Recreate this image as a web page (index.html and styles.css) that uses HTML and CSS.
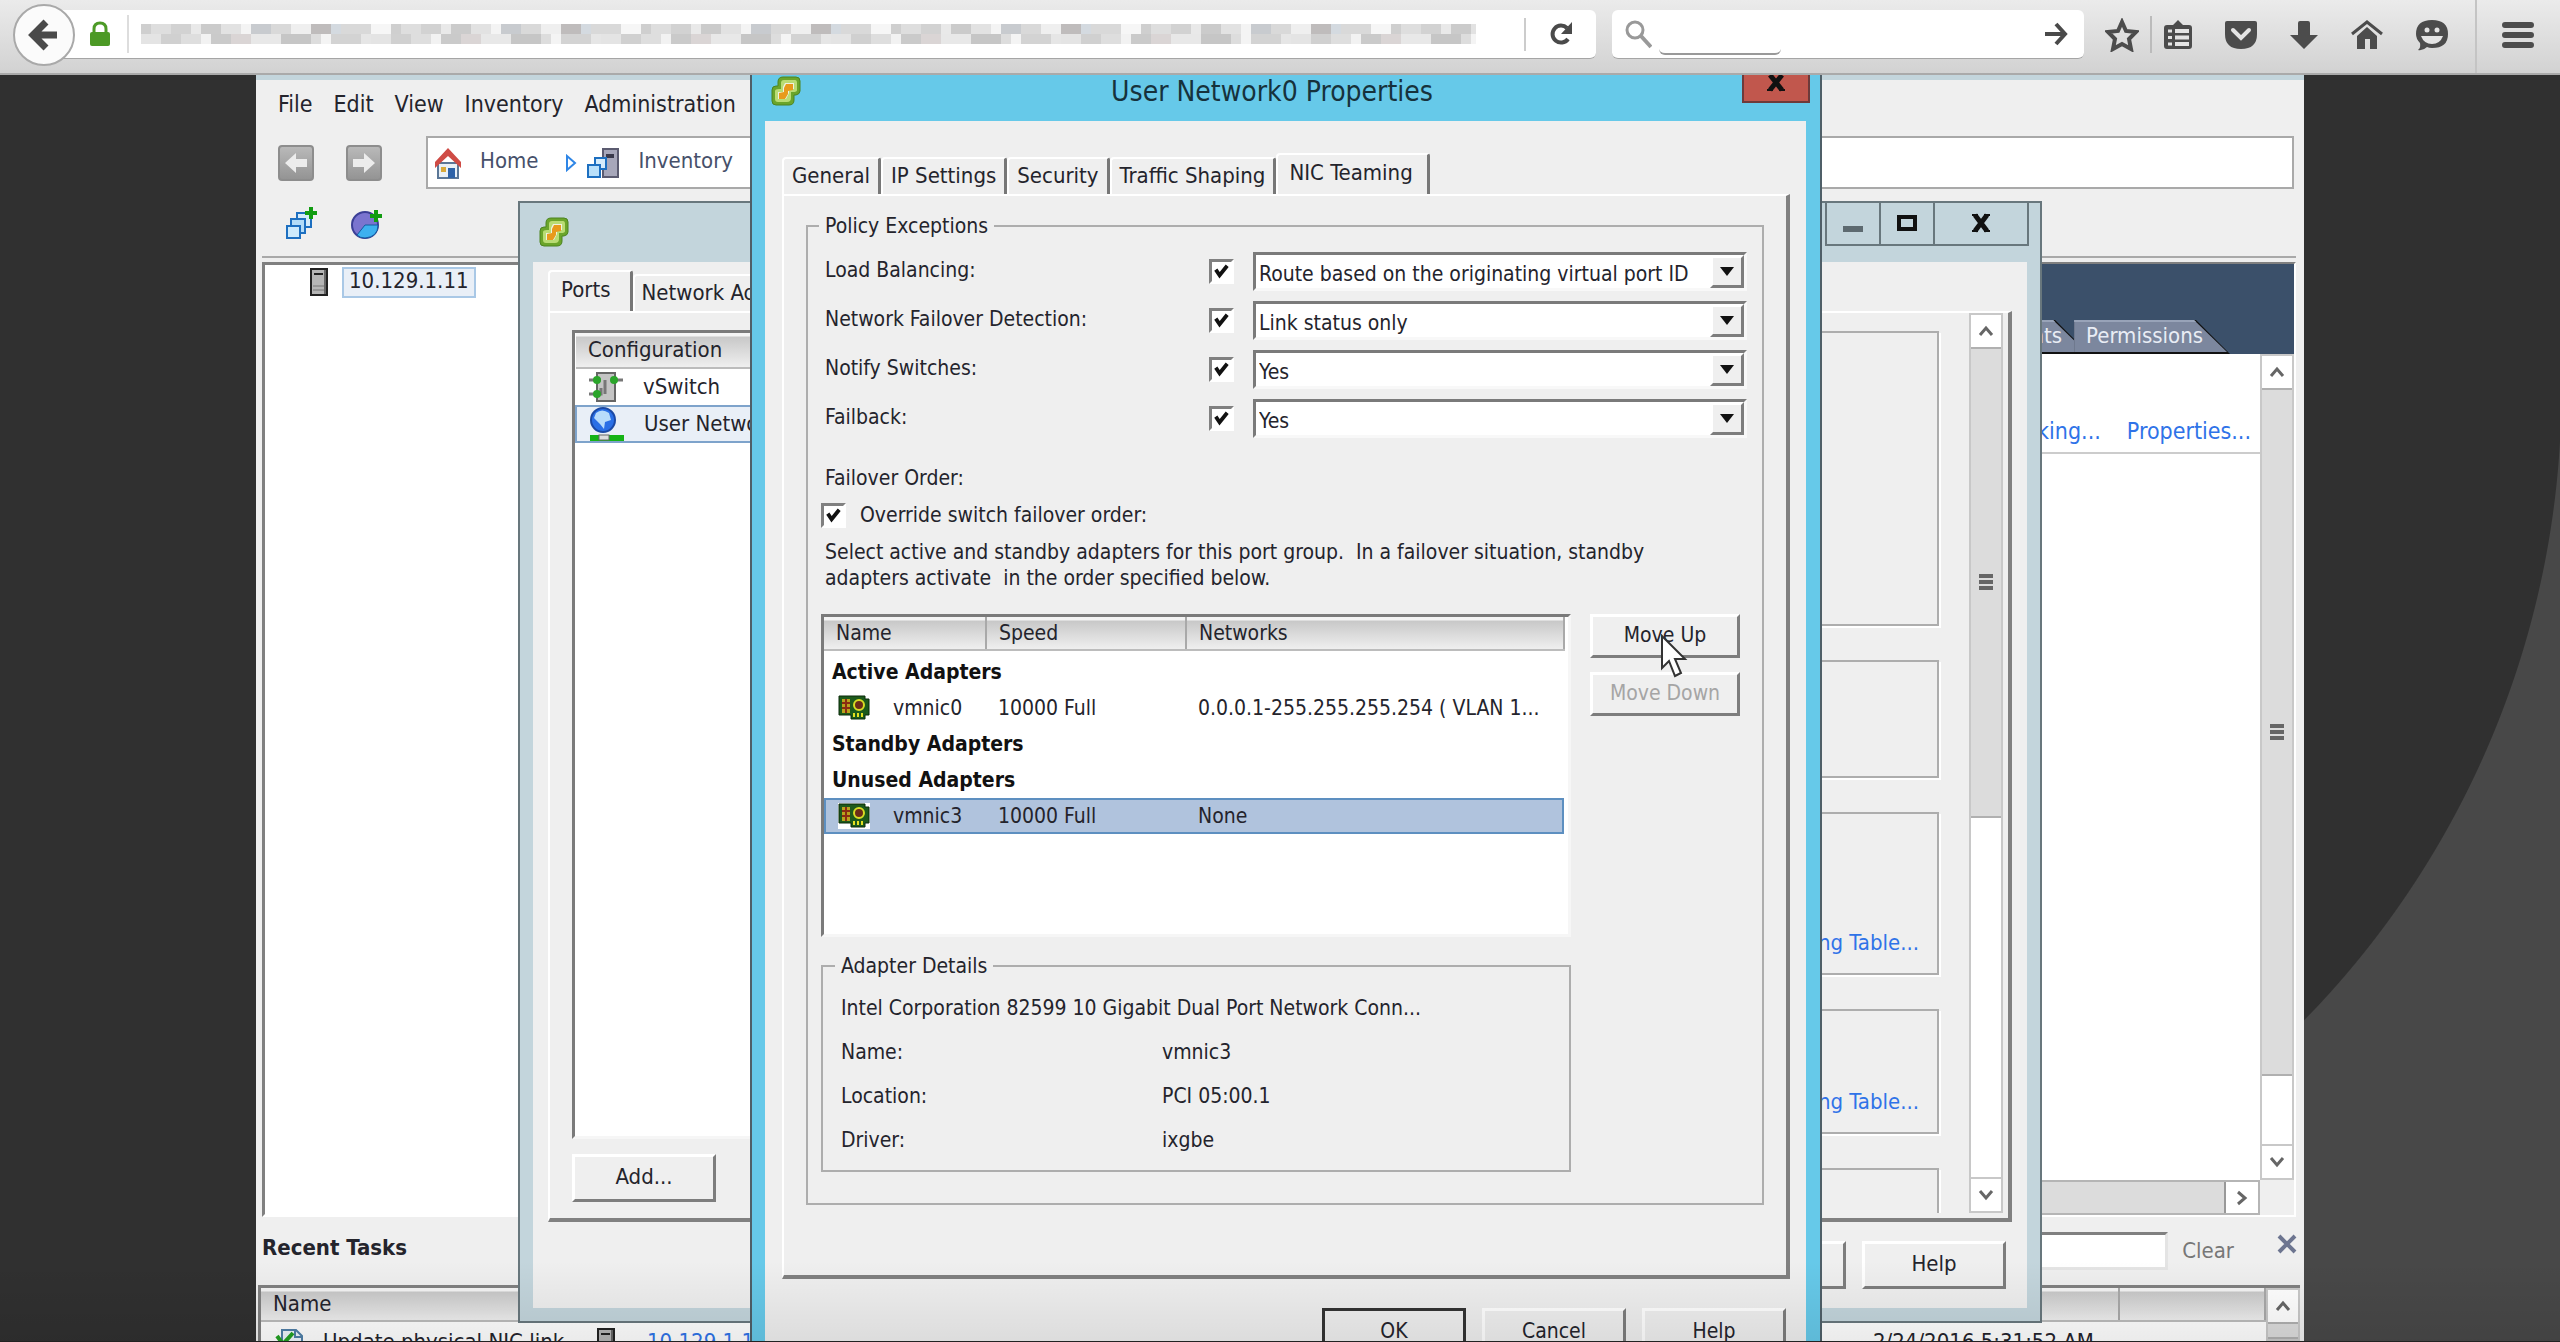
FILE: index.html
```html
<!DOCTYPE html>
<html lang="en">
	<head>
		<meta charset="utf-8">
		<title>User Network0 Properties</title>
		<link rel="stylesheet" href="styles.css">
	</head>
	<body>
		<svg class="defs" width="0" height="0">
			<symbol id="vm" viewBox="0 0 32 32">
				<path d="M13 2h13q4 0 4 4v10q0 3-4 4h-2v5q0 5-5 5H6q-4 0-4-4V15q0-4 4-4h2V7q0-5 5-5z" fill="#6ba52a" stroke="#4c8420" stroke-width="1"/>
				<path d="M14 5h11q2 0 2 3v7q0 2-4 2h-2v6q0 4-4 4H8q-3 0-3-3v-8q0-2 4-2h2V8q0-3 3-3z" fill="#b9dc74"/>
				<path d="M15 8h9v6h-5v4l-3 6H8v-7h5v-5z" fill="#eef3df"/>
				<path d="M16 9h7v6l-5 1v3l-3 5H9v-6l5-1v-4z" fill="#e89a1c"/>
			</symbol>
			<symbol id="up" viewBox="0 0 16 12"><path d="M2 10l6-7 6 7" fill="none" stroke="#666" stroke-width="3"/></symbol>
			<symbol id="down" viewBox="0 0 16 12"><path d="M2 2l6 7 6-7" fill="none" stroke="#666" stroke-width="3"/></symbol>
			<symbol id="right" viewBox="0 0 12 16"><path d="M2 2l7 6-7 6" fill="none" stroke="#666" stroke-width="3"/></symbol>
			<symbol id="grip" viewBox="0 0 14 16"><path d="M0 2h14M0 8h14M0 14h14" stroke="#666" stroke-width="4"/></symbol>
			<symbol id="nic" viewBox="0 0 32 26">
				<path d="M1 1h26v3h4v16h-4v4H13v-4H1z" fill="#1d5a1b" stroke="#0b2b0a" stroke-width="1"/>
				<path d="M4 4h8v14H4z" fill="#b9a21c"/>
				<path d="M4 8h8M4 13h8M8 4v14" stroke="#8a2c12" stroke-width="2"/>
				<circle cx="21" cy="10" r="5" fill="#6b2c18" stroke="#d7dc24" stroke-width="2"/>
				<path d="M16 18v4M20 18v4M24 18v4" stroke="#e4e021" stroke-width="2"/>
			</symbol>
			<symbol id="host" viewBox="0 0 18 28">
				<rect x="1" y="1" width="16" height="26" fill="#b5b5b5" stroke="#222" stroke-width="2"/>
				<path d="M4 6h9" stroke="#222" stroke-width="2"/>
				<path d="M3 18h11M3 22h11" stroke="#777"/>
				<path d="M15 2v24" stroke="#666" stroke-width="2"/>
			</symbol>
			<symbol id="boxes" viewBox="0 0 32 32">
				<rect x="12" y="5" width="14" height="14" fill="#d5ecfb" stroke="#1d6fc0" stroke-width="2"/>
				<rect x="6" y="11" width="14" height="14" fill="#b3dcf8" stroke="#1d6fc0" stroke-width="2"/>
				<rect x="2" y="18" width="13" height="12" fill="#cdeafc" stroke="#1d6fc0" stroke-width="2"/>
			</symbol>
		</svg>

		<header class="browser">
			<button class="back" aria-label="Back">
				<svg width="32" height="32" viewBox="0 0 32 32"><path d="M18 3L5 16l13 13M6 16h23" fill="none" stroke="#4a4a4a" stroke-width="7"/></svg>
			</button>
			<div class="urlbar">
				<svg width="22" height="26" viewBox="0 0 22 26"><path d="M5 12V8q0-6 6-6t6 6v4" fill="none" stroke="#4c9a26" stroke-width="3"/><rect x="1" y="11" width="20" height="14" rx="2" fill="#4c9a26"/></svg>
				<input class="url" type="text" aria-label="Address">
				<button class="reload" aria-label="Reload">
					<svg width="26" height="26" viewBox="0 0 26 26"><path d="M20 18a8.500 8.500 0 1 1-1-11" fill="none" stroke="#4a4a4a" stroke-width="4"/><path d="M24 1v12H13z" fill="#4a4a4a"/></svg>
				</button>
			</div>
			<div class="searchbar">
				<svg width="28" height="30" viewBox="0 0 28 30"><circle cx="11" cy="11" r="8" fill="none" stroke="#999" stroke-width="3"/><path d="M17 17l10 11" stroke="#999" stroke-width="4"/></svg>
				<input class="search" type="text" aria-label="Search">
				<button aria-label="Go">
					<svg width="24" height="24" viewBox="0 0 24 24"><path d="M1 12h19M12 2l9 10-9 10" fill="none" stroke="#4a4a4a" stroke-width="4"/></svg>
				</button>
			</div>
			<nav class="tools">
				<button aria-label="Bookmark">
					<svg width="34" height="34" viewBox="0 0 34 34"><path d="M17 4l4 9 10 1-7 7 2 10-9-5-9 5 2-10-7-7 10-1z" fill="none" stroke="#4c4c4c" stroke-width="4"/></svg>
				</button>
				<button class="ruled" aria-label="Bookmarks list">
					<svg width="30" height="32" viewBox="0 0 30 32"><path d="M10 6l5-5 5 5h6q3 0 3 3v18q0 3-3 3H4q-3 0-3-3V9q0-3 3-3z" fill="#4c4c4c"/><path d="M12 12h14M12 18.500h14M12 25h14" stroke="#e4e4e4" stroke-width="4"/><path d="M5 12h4M5 18.500h4M5 25h4" stroke="#e4e4e4" stroke-width="3"/></svg>
				</button>
				<button aria-label="Pocket">
					<svg width="34" height="32" viewBox="0 0 34 32"><path d="M1 4q0-2 2-2h28q2 0 2 2v11q0 15-16 15T1 15z" fill="#4c4c4c"/><path d="M9 11l8 8 8-8" fill="none" stroke="#e4e4e4" stroke-width="4" stroke-linecap="round"/></svg>
				</button>
				<button aria-label="Downloads">
					<svg width="30" height="32" viewBox="0 0 30 32"><path d="M9 4q0-2 2-2h8q2 0 2 2v12h8L15 30 1 16h8z" fill="#4c4c4c"/></svg>
				</button>
				<button aria-label="Home page">
					<svg width="34" height="32" viewBox="0 0 34 32"><path d="M2 15L17 3l15 12" fill="none" stroke="#4c4c4c" stroke-width="3"/><path d="M7 17l10-9 10 9v13h-7V20h-5v10H7z" fill="#4c4c4c"/></svg>
				</button>
				<button aria-label="Chat">
					<svg width="34" height="32" viewBox="0 0 34 32"><path d="M17 1q16 0 16 14T17 29q-3 0-5-1-4 4-9 3 3-2 2-7-4-4-4-9Q1 1 17 1z" fill="#4c4c4c"/><circle cx="12" cy="11" r="2.500" fill="#e4e4e4"/><circle cx="22" cy="11" r="2.500" fill="#e4e4e4"/><path d="M6 17h22q-3 8-11 8T6 17z" fill="#e4e4e4"/></svg>
				</button>
			</nav>
			<button class="menu-btn" aria-label="Menu">
				<svg width="34" height="28" viewBox="0 0 34 28"><path d="M4 4h26M4 14h26M4 24h26" stroke="#4c4c4c" stroke-width="6" stroke-linecap="round"/></svg>
			</button>
		</header>

		<main class="screen">

			<!-- vSphere client -->
			<section class="client">
				<nav class="menubar">
					<a href="#">File</a><a href="#">Edit</a><a href="#">View</a><a href="#">Inventory</a><a href="#">Administration</a>
				</nav>
				<div class="addressrow">
					<button class="arrow" aria-label="Previous"><svg width="24" height="24" viewBox="0 0 24 24"><path d="M1 12L12 2v6h11v8H12v6z" fill="#ececec"/></svg></button>
					<button class="arrow" aria-label="Next"><svg width="24" height="24" viewBox="0 0 24 24"><path d="M23 12L12 2v6H1v8h11v6z" fill="#ececec"/></svg></button>
					<div class="crumbs">
						<svg width="28" height="32" viewBox="0 0 28 32"><path d="M4 16h20v15H4z" fill="#e8f0f7" stroke="#5b7797" stroke-width="2"/><path d="M14 1L1 15v6L14 9l13 12v-6z" fill="#cf4b45"/><rect x="14" y="21" width="7" height="10" fill="#2d62a8"/><rect x="7" y="20" width="5" height="5" fill="#d8a93a"/></svg>
						<a href="#">Home</a>
						<svg class="crumb-arrow" width="12" height="18" viewBox="0 0 12 18"><path d="M2 2l8 7-8 7z" fill="#fff" stroke="#2f86e6" stroke-width="2"/></svg>
						<svg width="34" height="30" viewBox="0 0 34 30"><rect x="17" y="1" width="15" height="28" fill="#a7a7ba" stroke="#5b5b70" stroke-width="2"/><path d="M20 6h8v4h-8z" fill="#3a3a4c"/><rect x="9" y="10" width="11" height="11" fill="#d5ecfb" stroke="#1d6fc0" stroke-width="2"/><rect x="2" y="17" width="12" height="12" fill="#b9e0fa" stroke="#1d6fc0" stroke-width="2"/></svg>
						<a href="#">Inventory</a>
					</div>
				</div>
				<div class="toolbar">
					<button aria-label="New virtual machine"><svg width="34" height="34" viewBox="0 0 34 34"><use href="#boxes" width="32" height="32" y="2"/><path d="M26 1v12M20 7h12" stroke="#119c11" stroke-width="4"/></svg></button>
					<button aria-label="New resource pool"><svg width="34" height="34" viewBox="0 0 34 34"><circle cx="15" cy="19" r="13" fill="#7a74cf" stroke="#3b3f96" stroke-width="2"/><path d="M15 19h13q0 12-13 13-5 0-8-3z" fill="#3db0ef" stroke="#155c9e"/><path d="M26 4v12M20 10h12" stroke="#119c11" stroke-width="4"/></svg></button>
				</div>

				<div class="panes">
					<div class="tree">
						<svg width="18" height="28"><use href="#host"/></svg>
						<a href="#">10.129.1.11</a>
					</div>
					<div class="content">
						<div class="content-tabs">
							<button><span>Events</span></button>
							<button><span>Permissions</span></button>
						</div>
						<div class="content-body">
							<div class="content-main">
								<div class="content-links">
									<a href="#">Add Networking...</a>
									<a href="#">Properties...</a>
								</div>
							</div>
							<div class="scroll">
								<button aria-label="Scroll up"><svg width="16" height="12"><use href="#up"/></svg></button>
								<div class="thumb thumb-main"><svg width="14" height="16"><use href="#grip"/></svg></div>
								<div class="track"></div>
								<button aria-label="Scroll down"><svg width="16" height="12"><use href="#down"/></svg></button>
							</div>
						</div>
						<div class="hscroll">
							<div class="hthumb"></div>
							<button aria-label="Scroll right"><svg width="12" height="16"><use href="#right"/></svg></button>
						</div>
					</div>
				</div>

				<div class="tasks-bar">
					<h2>Recent Tasks</h2>
					<input type="text" aria-label="Filter tasks">
					<button class="clear">Clear</button>
					<button class="close-tasks" aria-label="Close tasks"><svg width="20" height="20" viewBox="0 0 20 20"><path d="M2 2l16 16M18 2L2 18" stroke="#6d7590" stroke-width="4"/></svg></button>
				</div>
				<div class="tasks">
					<table>
						<thead><tr><th class="t-name">Name</th><th class="t-target"></th><th class="t-time"></th><th></th></tr></thead>
						<tbody>
							<tr>
								<td><span class="cell"><svg width="28" height="28" viewBox="0 0 28 28"><path d="M7 2h14l6 6v19H7z" fill="#eef5fb" stroke="#4f7fa8" stroke-width="2"/><path d="M20 2v7h7" fill="none" stroke="#4f7fa8" stroke-width="2"/><path d="M2 8l6 8 10-11" fill="none" stroke="#22a022" stroke-width="4"/></svg>Update physical NIC link</span></td>
								<td><span class="cell cell-host"><svg width="18" height="28"><use href="#host"/></svg><a href="#">10.129.1.11</a></span></td>
								<td>2/24/2016 5:31:52 AM</td>
								<td></td>
							</tr>
						</tbody>
					</table>
					<div class="scroll">
						<button aria-label="Scroll up"><svg width="16" height="12"><use href="#up"/></svg></button>
						<div class="thumb"></div>
					</div>
				</div>
			</section>

			<!-- vSwitch properties -->
			<section class="win vswitch">
				<div class="titlebar">
					<svg width="32" height="32"><use href="#vm"/></svg>
					<div class="controls">
						<button aria-label="Minimize"><svg width="20" height="20" viewBox="0 0 20 20"><path d="M0 16h20" stroke="#5d6a70" stroke-width="6"/></svg></button>
						<button aria-label="Maximize"><svg width="20" height="20" viewBox="0 0 20 20"><rect x="2" y="4" width="16" height="12" fill="none" stroke="#111" stroke-width="4"/></svg></button>
						<button class="wide" aria-label="Close"><svg width="20" height="20" viewBox="0 0 20 20"><path d="M4 2l12 16M16 2L4 18" stroke="#111" stroke-width="5"/><path d="M1 2h6M13 2h6M1 18h6M13 18h6" stroke="#111" stroke-width="2"/></svg></button>
					</div>
				</div>
				<div class="win-body">
					<div class="tabs">
						<button class="tab active">Ports</button>
						<button class="tab">Network Adapters</button>
					</div>
					<div class="page">
						<div class="ports">
							<div class="list">
								<table>
									<thead><tr><th>Configuration</th></tr></thead>
									<tbody>
										<tr><td><span class="cell"><svg width="34" height="30" viewBox="0 0 34 30"><rect x="8" y="1" width="18" height="28" fill="#c4c4c4" stroke="#666" stroke-width="2"/><path d="M0 8h12M0 22h12v-6M22 8h12M16 8v14" stroke="#777" stroke-width="3" fill="none"/><circle cx="8" cy="8" r="4" fill="#2aa52a"/><circle cx="25" cy="8" r="4" fill="#2aa52a"/><circle cx="8" cy="22" r="4" fill="#2aa52a"/></svg>vSwitch</span></td></tr>
										<tr class="hot"><td><span class="cell"><svg width="34" height="34" viewBox="0 0 34 34"><circle cx="13" cy="13" r="12" fill="#2a6fe6" stroke="#1b49a5" stroke-width="2"/><path d="M6 6q6-5 13 0l2 7-6 2-1 7-4-5-6-6z" fill="#b8dcfb"/><path d="M0 31h34" stroke="#15b315" stroke-width="6"/><rect x="9" y="28" width="10" height="5" fill="#ddd" stroke="#666"/></svg>User Network0</span></td></tr>
									</tbody>
								</table>
							</div>
							<button class="btn">Add...</button>
						</div>
						<div class="info">
							<div class="box box-a"></div>
							<div class="box box-b"></div>
							<div class="box box-c"><a href="#">Routing Table...</a></div>
							<div class="box box-d"><a href="#">Routing Table...</a></div>
							<div class="box box-e"></div>
						</div>
						<div class="scroll">
							<button aria-label="Scroll up"><svg width="16" height="12"><use href="#up"/></svg></button>
							<div class="thumb thumb-info"><svg width="14" height="16"><use href="#grip"/></svg></div>
							<div class="track"></div>
							<button aria-label="Scroll down"><svg width="16" height="12"><use href="#down"/></svg></button>
						</div>
					</div>
					<div class="footer">
						<button class="btn" aria-label="Close"></button>
						<button class="btn">Help</button>
					</div>
				</div>
			</section>

			<!-- port group properties -->
			<section class="win props">
				<div class="titlebar">
					<svg width="32" height="32"><use href="#vm"/></svg>
					<h1>User Network0 Properties</h1>
					<button class="close" aria-label="Close"><svg width="20" height="18" viewBox="0 0 20 18"><path d="M4 0l12 15M16 0L4 15" stroke="#111" stroke-width="5"/><path d="M1 15h6M13 15h6" stroke="#111" stroke-width="2"/></svg></button>
				</div>
				<div class="win-body">
					<div class="tabs">
						<button class="tab">General</button>
						<button class="tab">IP Settings</button>
						<button class="tab">Security</button>
						<button class="tab">Traffic Shaping</button>
						<button class="tab active">NIC Teaming</button>
					</div>
					<div class="page">
						<fieldset class="policy">
							<legend>Policy Exceptions</legend>
							<div class="options">
								<label for="lb">Load Balancing:</label>
								<input type="checkbox" id="lb" checked>
								<div class="combo"><select aria-label="Load Balancing"><option>Route based on the originating virtual port ID</option></select><span></span></div>
								<label for="nfd">Network Failover Detection:</label>
								<input type="checkbox" id="nfd" checked>
								<div class="combo"><select aria-label="Network Failover Detection"><option>Link status only</option></select><span></span></div>
								<label for="ns">Notify Switches:</label>
								<input type="checkbox" id="ns" checked>
								<div class="combo"><select aria-label="Notify Switches"><option>Yes</option><option>No</option></select><span></span></div>
								<label for="fb">Failback:</label>
								<input type="checkbox" id="fb" checked>
								<div class="combo"><select aria-label="Failback"><option>Yes</option><option>No</option></select><span></span></div>
							</div>

							<p class="order">Failover Order:</p>
							<div class="override">
								<input type="checkbox" id="ov" checked>
								<label for="ov">Override switch failover order:</label>
							</div>
							<p class="hint">Select active and standby adapters for this port group.&nbsp; In a failover situation, standby<br>adapters activate&nbsp; in the order specified below.</p>

							<div class="failover">
								<div class="list adapters">
									<table>
										<thead><tr><th class="c-name">Name</th><th class="c-speed">Speed</th><th>Networks</th></tr></thead>
										<tbody>
											<tr class="group"><td colspan="3">Active Adapters</td></tr>
											<tr><td><span class="cell"><svg width="32" height="26"><use href="#nic"/></svg>vmnic0</span></td><td>10000 Full</td><td>0.0.0.1-255.255.255.254 ( VLAN 1...</td></tr>
											<tr class="group"><td colspan="3">Standby Adapters</td></tr>
											<tr class="group"><td colspan="3">Unused Adapters</td></tr>
											<tr class="selected"><td><span class="cell"><svg width="32" height="26"><use href="#nic"/></svg>vmnic3</span></td><td>10000 Full</td><td>None</td></tr>
										</tbody>
									</table>
								</div>
								<div class="moves">
									<button class="btn">Move Up
										<svg class="cursor" width="28" height="46" viewBox="0 0 28 46"><path d="M2 2v32l7-7 6 15 6-3-6-14h10z" fill="#fff" stroke="#333" stroke-width="2"/></svg>
									</button>
									<button class="btn" disabled>Move Down</button>
								</div>
								<fieldset class="details">
									<legend>Adapter Details</legend>
									<p>Intel Corporation 82599 10 Gigabit Dual Port Network Conn...</p>
									<dl>
										<dt>Name:</dt><dd>vmnic3</dd>
										<dt>Location:</dt><dd>PCI 05:00.1</dd>
										<dt>Driver:</dt><dd>ixgbe</dd>
									</dl>
								</fieldset>
							</div>
						</fieldset>
					</div>
					<div class="footer">
						<button class="btn default">OK</button>
						<button class="btn">Cancel</button>
						<button class="btn">Help</button>
					</div>
				</div>
			</section>
		</main>
	</body>
</html>
```
FILE: styles.css
```css
* {
	box-sizing: border-box;
}
body {
	margin: 0;
	height: 100vh;
	display: flex;
	flex-direction: column;
	overflow: hidden;
	font-family: "DejaVu Sans Condensed", "DejaVu Sans", sans-serif;
	font-stretch: condensed;
	font-size: 21px;
	line-height: 26px;
	color: #24242c;
}
button, input, select {
	font: inherit;
	color: inherit;
	border: 0;
	padding: 0;
	margin: 0;
	background: none;
	border-radius: 0;
}
svg {
	display: block;
	flex: none;
}
.defs {
	position: absolute;
}
h1, h2, p, dl, dd {
	margin: 0;
}
a {
	color: #2f73e8;
	text-decoration: none;
}
table {
	width: 100%;
	border-collapse: collapse;
	table-layout: fixed;
}
th {
	font-weight: normal;
	text-align: left;
}

/* browser toolbar */
.browser {
	flex: none;
	height: 75px;
	display: flex;
	align-items: center;
	padding: 0 25px 4px 13px;
	background: linear-gradient(#ebebeb, #d2d2d2);
	border-bottom: 2px solid #aaa;
}
.back {
	width: 62px;
	height: 62px;
	flex: none;
	display: flex;
	align-items: center;
	justify-content: center;
	border: 2px solid #a9a9a9;
	border-radius: 50%;
	background: #fbfbfb;
	z-index: 1;
}
.urlbar, .searchbar {
	height: 49px;
	display: flex;
	align-items: center;
	background: #fff;
	border-bottom: 1px solid #a5a5a5;
	border-radius: 6px;
}
.urlbar {
	flex: 1;
	margin-left: -30px;
	padding-left: 44px;
}
.url {
	flex: 1;
	height: 38px;
	margin: 0 48px 0 16px;
	border-left: 2px solid #ddd;
	background:
		repeating-linear-gradient(90deg, #cfcfcf 0 10px, #dedede 10px 30px, #d2d2d2 30px 50px, #e9e9e9 50px 60px, #cbcbcb 60px 80px, #e2e2e2 80px 100px, #f4f4f4 100px 110px, #c8cbcf 110px 130px, #d9d9d9 130px 150px, #efefef 150px 170px, #bfbcbc 170px 190px, #d4dae0 190px 200px, #d9d9d9 200px 230px, #f6f6f6 230px 250px) 12px 9px / calc(100% - 12px) 10px no-repeat,
		repeating-linear-gradient(90deg, #e4e4e4 0 20px, #d0d0d0 20px 40px, #dedede 40px 60px, #f2f2f2 60px 70px, #cacaca 70px 90px, #dad5d5 90px 110px, #e8e8e8 110px 140px, #c6c6c6 140px 170px, #ddd 170px 180px, #f4f4f4 180px 190px, #d3d3d3 190px 220px, #e6e6e6 220px 230px) 12px 19px / calc(100% - 12px) 10px no-repeat;
}
.reload {
	height: 33px;
	padding: 3px 22px;
	border-left: 2px solid #ccc;
}
.searchbar {
	width: 472px;
	margin-left: 16px;
	padding: 0 16px 0 12px;
}
.search {
	width: 122px;
	height: 36px;
	margin: 6px auto 0 7px;
	border-bottom: 2px solid #999;
	border-radius: 6px;
}
.tools {
	display: flex;
	align-items: center;
	height: 37px;
	margin-left: 21px;
	gap: 31px;
}
.ruled {
	height: 37px;
	padding-left: 11px;
	margin-left: -20px;
	border-left: 2px solid #bbb;
}
.menu-btn {
	align-self: stretch;
	margin: 0 0 -4px 26px;
	padding: 0 0 4px 24px;
	border-left: 2px solid #c4c4c4;
}

.screen {
	flex: 1;
	position: relative;
	overflow: hidden;
	background:
		linear-gradient(#303030, #303030) 0 0 / 10% 100% no-repeat,
		linear-gradient(#303030, #303030) 0 0 / 100% 315px no-repeat,
		radial-gradient(circle 900px at 1661px 315px, #303030 900px, #484848 901px);
	border-bottom: 1px solid #222;
}
.screen::after {
	content: "";
	position: absolute;
	left: 0;
	right: 0;
	bottom: 0;
	height: 80px;
	background: linear-gradient(transparent, rgba(0, 0, 0, .08));
	pointer-events: none;
}

/* client window */
.client {
	position: absolute;
	left: 10%;
	right: 10%;
	top: 0;
	bottom: 0;
	display: flex;
	flex-direction: column;
	background: #efefef;
	border-top: 5px solid #c3d5dc;
	font-size: 22px;
}
.menubar {
	display: flex;
	height: 48px;
	align-items: center;
	padding-left: 22px;
	gap: 21px;
	font-size: 23px;
}
.menubar a {
	color: #24242c;
}
.addressrow {
	display: flex;
	align-items: center;
	height: 53px;
	margin-top: 8px;
	padding: 0 10px 0 22px;
}
.arrow {
	width: 36px;
	height: 36px;
	margin-right: 32px;
	padding: 4px;
	border: 2px solid #8d8d8d;
	border-radius: 4px;
	background: linear-gradient(#b9b9b9, #949494);
}
.crumbs {
	flex: 1;
	height: 53px;
	margin-left: 12px;
	padding-left: 6px;
	display: flex;
	align-items: center;
	border: 2px solid #a9a9a9;
	background: #fff;
}
.crumbs a {
	color: #46506a;
	margin: 0 18px;
	padding-bottom: 4px;
}
.crumb-arrow {
	margin: 0 9px;
}
.toolbar {
	display: flex;
	align-items: center;
	gap: 31px;
	height: 69px;
	padding-left: 23px;
	margin: 0 8px 0 6px;
	border-bottom: 2px solid #a9a9a9;
}
.panes {
	flex: 1;
	min-height: 0;
	display: flex;
	gap: 8px;
	margin: 4px 8px 0 6px;
}
.tree {
	width: 30%;
	display: flex;
	align-items: flex-start;
	gap: 14px;
	padding: 2px 0 0 45px;
	background: #fff;
	border: 3px solid;
	border-color: #808080 #fff #fff #808080;
}
.tree svg {
	margin-top: 1px;
}
.tree a {
	height: 31px;
	padding: 0 5px;
	line-height: 24px;
	border: 2px solid #a9c8e6;
	background: #e9eff7;
	color: #24242c;
}
.content {
	flex: 1;
	display: flex;
	flex-direction: column;
	border: 2px solid;
	border-color: #808080 #fff #fff #808080;
	background: #efefef;
}
.content-tabs {
	height: 90px;
	display: flex;
	justify-content: flex-end;
	align-items: flex-end;
	padding-right: 64px;
	background: #3b506a;
}
.content-tabs button {
	margin-left: -15px;
	background: #111;
	color: #e9edf5;
	clip-path: polygon(0 0, calc(100% - 34px) 0, 100% 100%, 0 100%);
}
.content-tabs span {
	display: block;
	height: 32px;
	margin-bottom: 2px;
	padding: 1px 27px 0 12px;
	background: #7c879e;
	border-top: 2px solid #98a3b8;
	clip-path: polygon(0 0, calc(100% - 36px) 0, calc(100% - 3px) 100%, 0 100%);
}
.content-body {
	flex: 1;
	display: flex;
	min-height: 0;
}
.content-main {
	flex: 1;
	background: #fff;
}
.content-links {
	height: 100px;
	display: flex;
	align-items: flex-end;
	justify-content: flex-end;
	gap: 26px;
	padding: 0 9px 8px 0;
	border-bottom: 2px solid #ccc;
	font-size: 23px;
}
.scroll {
	flex: none;
	width: 34px;
	display: flex;
	flex-direction: column;
	background: #fff;
	border: 2px solid #c8c8c8;
}
.scroll button {
	height: 32px;
	flex: none;
	display: flex;
	align-items: center;
	justify-content: center;
	background: #fff;
}
.track {
	flex: 1;
	border-bottom: 2px solid #c8c8c8;
}
.thumb {
	flex: 1;
	display: flex;
	align-items: center;
	justify-content: center;
	background: #dcdcdc;
	border: 2px solid #b0b0b0;
	border-width: 2px 0;
}
.thumb-main {
	flex: 10;
}
.thumb-info {
	flex: 13;
}
.thumb-info + .track {
	flex: 10;
}
.thumb-main + .track {
	flex: 1;
}
.hscroll {
	height: 35px;
	display: flex;
	margin-right: 34px;
	border: 2px solid #b5b5b5;
	background: #fff;
}
.hthumb {
	flex: 1;
	background: #dcdcdc;
	border-right: 2px solid #999;
}
.hscroll button {
	width: 32px;
	display: flex;
	align-items: center;
	justify-content: center;
}
.tasks-bar {
	height: 68px;
	display: flex;
	align-items: center;
	padding: 0 7px 0 6px;
}
.tasks-bar h2 {
	flex: 1;
	font-size: 22px;
	padding-bottom: 6px;
}
.tasks-bar input {
	width: 300px;
	height: 38px;
	background: #fff;
	border: 3px solid;
	border-color: #808080 #e4e4e4 #e4e4e4 #808080;
}
.clear {
	margin-left: 14px;
	color: #777;
}
.close-tasks {
	margin: -14px 0 0 43px;
}
.tasks {
	height: 56px;
	display: flex;
	overflow: hidden;
	margin: 0 4px 0 2px;
	border: 3px solid #808080;
	border-width: 3px 0 0 3px;
	background: #fff;
}
.tasks table {
	flex: 1;
	width: auto;
}
.tasks th, .list th {
	height: 33px;
	padding: 0 12px;
	background: linear-gradient(#f4f4f4 0 3px, #c8c8c8 4px, #efefef);
	border-right: 2px solid #a9a9a9;
	border-bottom: 2px solid #bcbcbc;
}
.tasks td {
	height: 40px;
	padding: 0 14px;
}
.t-name {
	width: 322px;
}
.t-target {
	width: 1276px;
}
.t-time {
	width: 260px;
}
.cell {
	display: flex;
	align-items: center;
	gap: 20px;
	white-space: nowrap;
}
.cell-host {
	gap: 32px;
}

/* dialogs */
.win {
	position: absolute;
	display: flex;
	flex-direction: column;
}
.titlebar {
	flex: none;
	display: flex;
}
.win-body {
	flex: 1;
	display: flex;
	flex-direction: column;
	background: #efefef;
}
.tabs {
	display: flex;
	height: 41px;
	align-items: flex-end;
	font-size: 22px;
}
.tab {
	height: 37px;
	padding: 0 8px 2px;
	border: 2px solid #fff;
	border-right: 3px solid #777;
	border-bottom: 0;
	border-radius: 4px 3px 0 0;
	white-space: nowrap;
}
.tab.active {
	height: 43px;
	margin-bottom: -2px;
	padding: 0 14px 6px 11px;
	background: #efefef;
}
.page {
	border: 2px solid #fff;
	border-right: 4px solid #808080;
	border-bottom: 4px solid #808080;
}
.footer {
	display: flex;
	justify-content: flex-end;
	gap: 16px;
}
.btn {
	width: 144px;
	height: 48px;
	padding-bottom: 2px;
	background: #efefef;
	border: 3px solid;
	border-color: #fff #7d7d7d #7d7d7d #fff;
}
.btn:disabled {
	color: #a5a5a5;
}
.list {
	background: #fff;
	border: 3px solid;
	border-color: #7a7a7a #f6f6f6 #f6f6f6 #7a7a7a;
}

.vswitch {
	left: 518px;
	width: 1524px;
	top: 126px;
	height: 1122px;
	padding: 0 13px 13px;
	border: 2px solid #68777d;
	background: #c3d5dc;
	font-size: 22px;
}
.vswitch .titlebar {
	height: 59px;
	padding: 13px 0 0 5px;
	justify-content: space-between;
}
.controls {
	display: flex;
	height: 44px;
	margin: -14px -2px 0 0;
	border: 2px solid #68777d;
	border-top: 0;
}
.controls button {
	width: 54px;
	display: flex;
	align-items: center;
	justify-content: center;
	border-right: 2px solid #68777d;
}
.controls .wide {
	width: 92px;
	border-right: 0;
}
.vswitch .win-body {
	padding: 8px 15px 0;
}
.vswitch .page {
	height: 911px;
	display: flex;
	padding: 0 5px 5px 22px;
}
.vswitch .tab {
	padding-left: 6px;
}
.vswitch .tab.active {
	padding-left: 11px;
	padding-right: 20px;
}
.ports {
	width: 560px;
	padding-top: 17px;
	display: flex;
	flex-direction: column;
	align-items: flex-start;
}
.ports .list {
	width: 100%;
	height: 809px;
	margin-bottom: 15px;
}
.ports th {
	height: 35px;
	padding-left: 12px;
}
.ports td {
	height: 38px;
	padding: 0 13px;
}
.ports .hot td {
	height: 35px;
	background: #e9eff7;
	border: 2px solid #7ea3cb;
}
.info {
	flex: 1;
	padding: 18px 30px 0 40px;
	display: flex;
	flex-direction: column;
	gap: 34px;
	overflow: hidden;
}
.box {
	flex: none;
	display: flex;
	align-items: flex-end;
	justify-content: flex-end;
	padding: 0 18px 17px 0;
	border: 2px solid #adadad;
	box-shadow: 2px 2px #fff;
}
.box-a { height: 295px; }
.box-b { height: 118px; }
.box-c { height: 163px; }
.box-d { height: 125px; }
.box-e { height: 90px; }
.vswitch .footer {
	padding: 19px 6px 0 0;
}

.props {
	left: 750px;
	width: 1072px;
	top: 0;
	height: 1300px;
	padding: 0 14px 0 13px;
	border: 2px solid #4f5f68;
	border-width: 0 2px;
	background: #66c9e9;
}
.props .titlebar {
	height: 46px;
	padding-left: 5px;
	justify-content: space-between;
}
.props h1 {
	font-size: 28px;
	font-weight: normal;
	line-height: 34px;
	color: #16323c;
}
.close {
	width: 68px;
	height: 28px;
	margin-right: -4px;
	display: flex;
	justify-content: center;
	background: #c1574d;
	border: 2px solid #6e3a3a;
	border-top: 0;
}
.props .win-body {
	padding: 32px 16px 0 17px;
}
.props .page {
	height: 1085px;
	padding: 17px 22px 0;
}
fieldset {
	margin: 0;
	min-width: 0;
	border: 2px solid #adadad;
}
legend {
	margin-left: -2px;
	padding: 0 6px;
}
.policy {
	padding: 13px 15px 31px 13px;
}
.options {
	display: grid;
	grid-template-columns: 388px 44px 1fr;
	grid-auto-rows: 39px;
	row-gap: 10px;
	align-items: center;
}
.options label, .order, .hint {
	padding-left: 4px;
}
.options label {
	padding-bottom: 4px;
}
input[type="checkbox"] {
	appearance: none;
	width: 25px;
	height: 25px;
	border: 3px solid;
	border-color: #808080 #fff #fff #808080;
	background: #fff;
}
input[type="checkbox"]:checked {
	background: #fff url("data:image/svg+xml,%3Csvg xmlns='http://www.w3.org/2000/svg' viewBox='0 0 20 20'%3E%3Cpath d='M4 8l4 6 8-10' fill='none' stroke='%23111' stroke-width='4'/%3E%3C/svg%3E") center / 19px no-repeat;
}
.combo {
	height: 39px;
	display: flex;
	background: #fff;
	border: 3px solid;
	border-color: #7a7a7a #f8f8f8 #f8f8f8 #7a7a7a;
}
.combo select {
	flex: 1;
	min-width: 0;
	appearance: none;
	padding-left: 3px;
	padding-top: 4px;
}
.combo span {
	width: 34px;
	display: flex;
	align-items: center;
	justify-content: center;
	background: #efefef;
	border: 3px solid;
	border-color: #fff #7d7d7d #7d7d7d #fff;
}
.combo span::before {
	content: "";
	border: 7px solid transparent;
	border-top: 9px solid #111;
	border-bottom: 0;
}
.order {
	margin-top: 27px;
}
.override {
	display: flex;
	align-items: center;
	gap: 14px;
	margin: 11px 0;
}
.failover {
	display: grid;
	grid-template-columns: 1fr 150px;
	column-gap: 19px;
	row-gap: 16px;
	margin-top: 23px;
	padding-right: 7px;
}
.adapters {
	height: 323px;
	padding-right: 3px;
}
.adapters tbody::before {
	content: "";
	display: block;
	height: 3px;
}
.adapters .c-name {
	width: 162px;
}
.adapters .c-speed {
	width: 200px;
}
.adapters td {
	height: 36px;
	padding: 0 12px;
	white-space: nowrap;
}
.adapters .cell {
	gap: 23px;
	padding-left: 2px;
}
.adapters .group td {
	padding: 0 8px;
	font-weight: bold;
	color: #111;
}
.adapters .selected {
	background: #b0c3dd;
	outline: 2px solid #5d8fc0;
	outline-offset: -2px;
}
.adapters .selected svg {
	background: #fff;
}
.moves {
	display: flex;
	flex-direction: column;
	gap: 14px;
}
.moves .btn {
	position: relative;
	width: 150px;
	height: 44px;
}
.cursor {
	position: absolute;
	left: 67px;
	top: 17px;
	z-index: 1;
}
.details {
	padding: 7px 18px 8px;
}
.details legend {
	margin-left: -6px;
}
.details p, .details dt, .details dd {
	line-height: 44px;
}
.details dl {
	display: grid;
	grid-template-columns: 321px 1fr;
}
.props .footer {
	padding: 29px 4px 0 0;
}
.default {
	border-color: #333;
}
```
